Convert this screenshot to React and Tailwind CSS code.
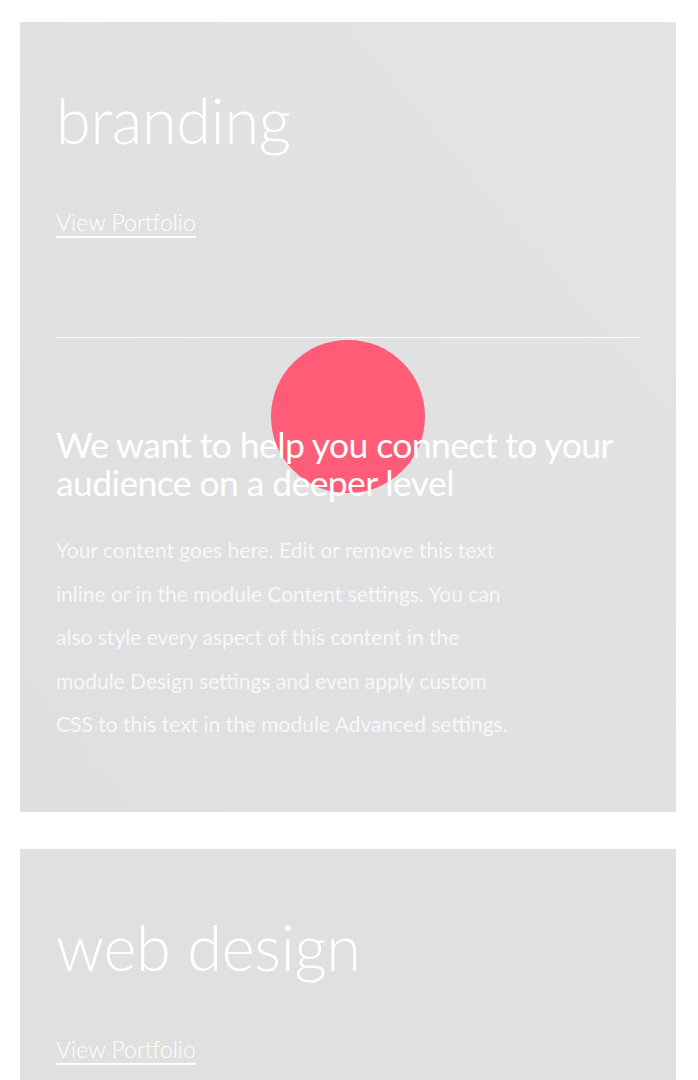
import React from 'react';

const font = { fontFamily: 'Lato, "Open Sans", sans-serif' };

const ServiceCard = ({ title, bg, children }) => (
    <div className={`ml-5 mr-[22px] px-9 pt-[62px] ${bg}`}>
        <h2 className="text-[63px] leading-[72px] font-light text-white tracking-[-0.3px]">{title}</h2>
        <a href="#" className="mt-[51px] inline-block text-[23px] leading-[30px] font-light text-white underline underline-offset-[5px] decoration-[1.5px]">
            View Portfolio
        </a>
        {children}
    </div>
);

export default function App() {
    return (
        <div className="min-h-screen bg-white pt-[22px] pb-10" style={font}>
            <ServiceCard title="branding" bg="bg-gradient-to-tr from-[#dfdfe1] via-[#e1e1e3] to-[#e4e4e6]">
                <div className="mt-[100px] border-t border-white/90" />
                <div className="relative pt-[88px] pb-[66px]">
                    <div className="absolute left-[215px] top-[2px] w-[154px] h-[153px] rounded-full bg-[#ff5c77]" />
                    <h3 className="relative text-[35.5px] leading-[38px] font-normal text-white tracking-[-0.6px]">
                        We want to help you connect to your audience on a deeper level
                    </h3>
                    <p className="relative mt-[26px] max-w-[458px] text-[21px] leading-[43.6px] font-normal text-[#f7f7f7]">
                        Your content goes here. Edit or remove this text inline or in the module Content settings. You can also style every aspect of this content in the module Design settings and even apply custom CSS to this text in the module Advanced settings.
                    </p>
                </div>
            </ServiceCard>
            <div className="h-[37px]" />
            <ServiceCard title="web design" bg="bg-[#e0e0de]">
                <div className="h-[200px]" />
            </ServiceCard>
        </div>
    );
}
